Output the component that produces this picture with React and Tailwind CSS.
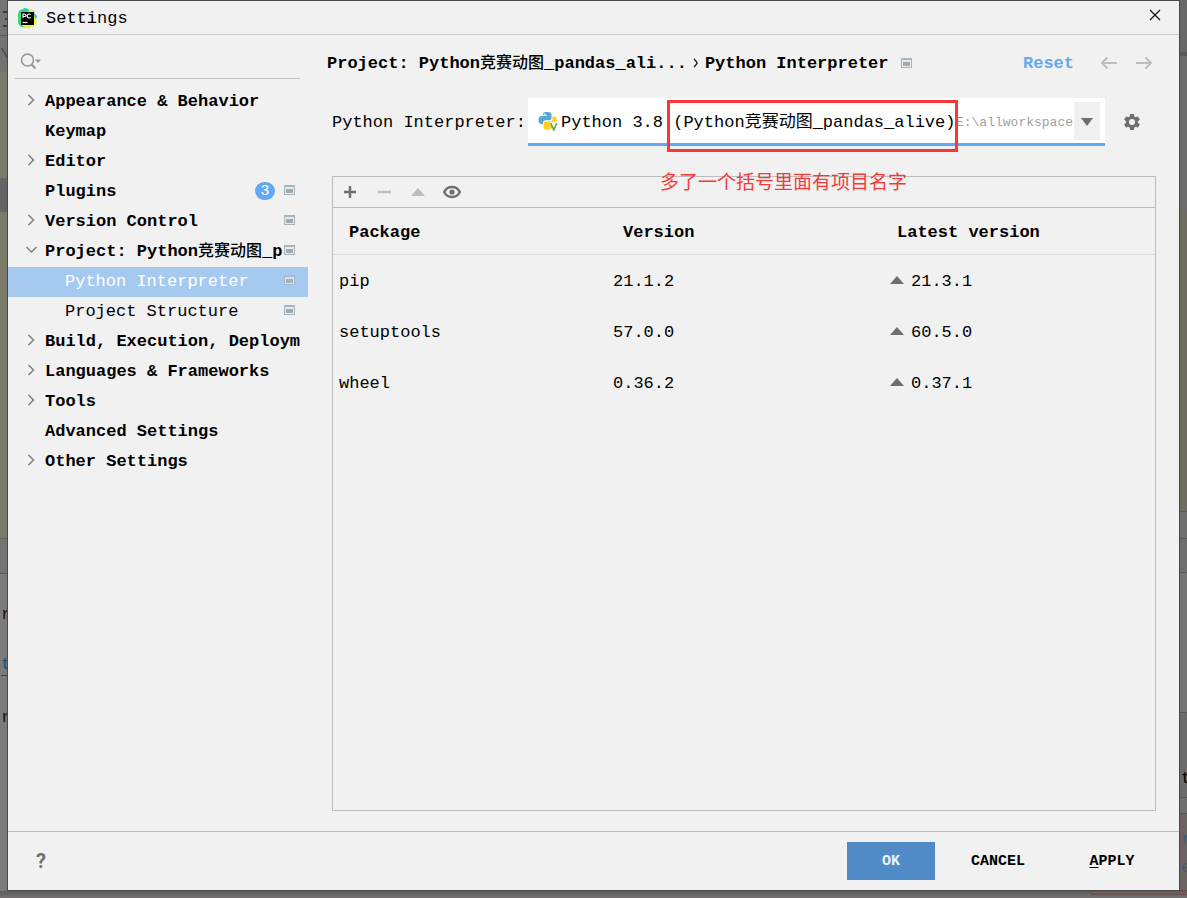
import React, { useState } from "react";

const MENU = [
  { name: "Appearance & Behavior", arrow: "right" },
  { name: "Keymap" },
  { name: "Editor", arrow: "right" },
  { name: "Plugins", count: 3, project: true },
  { name: "Version Control", arrow: "right", project: true },
  { name: "Project: Python", cjk: "竞赛动图", rest: "_p", arrow: "down", project: true },
  { name: "Python Interpreter", child: true, project: true },
  { name: "Project Structure", child: true, project: true },
  { name: "Build, Execution, Deploym", arrow: "right" },
  { name: "Languages & Frameworks", arrow: "right" },
  { name: "Tools", arrow: "right" },
  { name: "Advanced Settings" },
  { name: "Other Settings", arrow: "right" },
];

const PACKAGES = [
  { name: "pip", version: "21.1.2", latest: "21.3.1" },
  { name: "setuptools", version: "57.0.0", latest: "60.5.0" },
  { name: "wheel", version: "0.36.2", latest: "0.37.1" },
];

const Logo = () => (
  <svg width="20" height="20" viewBox="0 0 20 20" aria-hidden="true">
    <path d="M2 3 8 0l5 2 4 1 1 7-1 8-6 2-7-1-3-4z" fill="#21d789" />
    <path d="M13 3 16 4 20 8 18 13 15 9z" fill="#07c3f2" />
    <path d="M1 5 4 3v14l-3-3z" fill="#3ddc6d" />
    <path d="M10 2 15 1l2 5 1 4 2 4-4 5-7 1-5-3z" fill="#e6f23c" />
    <path d="M2 3 8 0l4 2-2 4H3z" fill="#21d7a0" />
    <rect x="4" y="4" width="13" height="13" fill="#000" />
    <path
      d="M6 10V6h1.600a1.200 1.200 0 0 1 0 2.500H6M13.600 6.600a2 2 0 1 0 0 2.800"
      fill="none"
      stroke="#fff"
      strokeWidth="1.200"
    />
    <path d="M5.500 14.500h5" stroke="#fff" strokeWidth="1.200" />
  </svg>
);

const ProjectIcon = ({ className }) => (
  <svg
    width="11"
    height="10"
    viewBox="0 0 11 10"
    className={`shrink-0 ${className || ""}`}
    aria-hidden="true"
  >
    <path d="M0 0h11v10H0z" fill="#aab4ba" />
    <path d="M1 2h9v7H1z" fill="#e6eaec" />
    <path d="M2 4h7v4H2z" fill="#a0abb1" />
  </svg>
);

const Chevron = ({ dir }) => (
  <svg
    width="14"
    height="14"
    viewBox="0 0 14 14"
    fill="none"
    stroke="#7f7f7f"
    strokeWidth="1.500"
    className="mb-1"
    aria-hidden="true"
  >
    <path d={dir === "down" ? "M2.500 4l5 5 5-5" : "M4.500 2l5 5-5 5"} />
  </svg>
);

const Triangle = ({ color, down, width = 14, className }) => (
  <svg
    width={width}
    height="8"
    viewBox="0 0 14 8"
    preserveAspectRatio="none"
    className={className}
    aria-hidden="true"
  >
    <path d={down ? "M0 0h14L7 8z" : "M0 8h14L7 0z"} fill={color} />
  </svg>
);

const Arrow = ({ back }) => (
  <svg
    width="18"
    height="14"
    viewBox="0 0 18 14"
    fill="none"
    stroke="#bdbdbd"
    strokeWidth="2"
    aria-hidden="true"
  >
    <path d={back ? "M17 7H2M7.500 1.500 2 7l5.500 5.500" : "M1 7h15M10.500 1.500 16 7l-5.500 5.500"} />
  </svg>
);

const PythonIcon = () => (
  <svg width="20" height="20" viewBox="0 0 20 20" className="shrink-0" aria-hidden="true">
    <path
      d="M5 5V3.500C5 1.500 6.500 1 9 1s4.500.5 4.500 2.500V7c0 1.500-1 2.300-2.300 2.300H7.500C6 9.300 5 10.300 5 11.700V13H3.500C1.500 13 .5 11.500.5 9s1-4 3-4H9v-.8H5z"
      fill="#56a8d6"
    />
    <path
      d="M14.500 5.500H16c2 0 2.800 1.500 2.800 4v2h-3L14 17c-1 1.300-2.800 1.700-4.500 1.700-2.500 0-4-.6-4-2.400V13c0-1.500 1-2.500 2.500-2.500h3.800c1.600 0 2.700-1 2.700-2.500z"
      fill="#ffd21f"
    />
    <circle cx="7" cy="3.200" r=".8" fill="#fff" />
    <path d="M12 11l3.500 9L19.500 11z" fill="#fff" />
    <path d="M12.800 12l3 7 3-7" fill="none" stroke="#5fad4e" strokeWidth="1.700" />
  </svg>
);

const GearIcon = () => (
  <svg width="20" height="20" viewBox="0 0 24 24" fill="#6e6e6e" aria-hidden="true">
    <path d="M19.140 12.940c.04-.3.06-.61.06-.94s-.02-.64-.07-.94l2.030-1.580c.18-.14.23-.41.12-.61l-1.920-3.320c-.12-.22-.37-.29-.59-.22l-2.390.96c-.5-.38-1.030-.7-1.620-.94L14.400 2.810c-.04-.24-.24-.41-.48-.41h-3.840c-.24 0-.43.17-.47.41L9.250 5.350c-.59.24-1.130.57-1.620.94L5.240 5.330c-.22-.08-.47 0-.59.22L2.740 8.870c-.12.21-.08.47.12.61l2.030 1.580c-.05.3-.09.63-.09.94s.02.64.07.94l-2.030 1.580c-.18.14-.23.41-.12.61l1.920 3.320c.12.22.37.29.59.22l2.390-.96c.5.38 1.030.7 1.620.94l.36 2.540c.05.24.24.41.48.41h3.840c.24 0 .44-.17.47-.41l.36-2.540c.59-.24 1.130-.56 1.620-.94l2.390.96c.22.08.47 0 .59-.22l1.920-3.320c.12-.22.07-.47-.12-.61zM12 15.600a3.600 3.600 0 1 1 0-7.200 3.600 3.600 0 0 1 0 7.200z" />
  </svg>
);

const SidebarItem = ({ item, active, onSelect }) => (
  <li>
    <button
      type="button"
      onClick={onSelect}
      className={`flex h-[30px] w-full items-center whitespace-pre pr-[13px] text-left ${
        active ? "bg-[#a6c9f0] text-white" : "text-black"
      } ${item.child ? "pl-[57px]" : "pl-4 font-bold"}`}
    >
      {!item.child && (
        <span className="w-[21px] shrink-0">
          {item.arrow && <Chevron dir={item.arrow} />}
        </span>
      )}
      <span className="min-w-0 flex-1">
        {item.name}
        {item.cjk && <span className="text-base font-medium">{item.cjk}</span>}
        {item.rest}
      </span>
      {item.count && (
        <span className="mb-0.5 mr-[9px] flex h-[18px] w-5 items-center justify-center rounded-full bg-[#62a8f2] pt-0.5 text-[15px] font-normal text-white">
          {item.count}
        </span>
      )}
      {item.project && <ProjectIcon className={active ? "mb-1 opacity-70" : "mb-1"} />}
    </button>
  </li>
);

const Sidebar = () => {
  const [selected, setSelected] = useState("Python Interpreter");

  return (
    <aside className="w-[300px] shrink-0">
      <label className="ml-[7px] mr-2 flex h-11 items-center border-b border-[#c0c0c0] pl-[5px] pt-2">
        <svg
          width="22"
          height="18"
          viewBox="0 0 22 18"
          fill="none"
          stroke="#8b969e"
          strokeWidth="1.500"
          aria-hidden="true"
        >
          <circle cx="7.500" cy="8" r="6" />
          <path d="M11.500 12.500l4 4" strokeWidth="2" />
          <path d="M15 7.500h6l-3 3.500z" fill="#8b969e" stroke="none" />
        </svg>
        <input
          type="search"
          aria-label="Search settings"
          className="min-w-0 flex-1 bg-transparent outline-none"
        />
      </label>
      <ul className="mt-2">
        {MENU.map((item) => (
          <SidebarItem
            key={item.name}
            item={item}
            active={selected === item.name}
            onSelect={() => setSelected(item.name)}
          />
        ))}
      </ul>
    </aside>
  );
};

const PackageTable = () => (
  <section className="relative mt-[30px] flex-1 border border-[#bdbdbd]">
    <div className="flex h-[31px] items-center gap-4 border-b border-[#bdbdbd] pl-2">
      <button type="button" aria-label="Install" className="flex w-[18px] justify-center">
        <svg width="14" height="14" viewBox="0 0 14 14" stroke="#6e6e6e" strokeWidth="2.400">
          <path d="M7 1v12M1 7h12" />
        </svg>
      </button>
      <button type="button" aria-label="Uninstall" className="flex w-[18px] justify-center">
        <svg width="14" height="14" viewBox="0 0 14 14" stroke="#bdbdbd" strokeWidth="2.400">
          <path d="M1 7h13" />
        </svg>
      </button>
      <button type="button" aria-label="Upgrade" className="flex w-[18px] justify-center">
        <Triangle color="#bdbdbd" />
      </button>
      <button type="button" aria-label="Show early releases" className="flex w-[18px] justify-center">
        <svg width="18" height="14" viewBox="0 0 18 14" fill="none" className="shrink-0">
          <path
            d="M1.200 7C3 3.200 6 2 9 2S15 3.200 16.800 7C15 10.800 12 12 9 12S3 10.800 1.200 7z"
            stroke="#6e6e6e"
            strokeWidth="2.400"
          />
          <circle cx="9" cy="7" r="2.600" fill="#6e6e6e" />
        </svg>
      </button>
    </div>
    <table className="w-full table-fixed text-left">
      <thead>
        <tr className="h-[46px] border-b border-[#dcdcdc]">
          <th className="pl-4 pt-1">Package</th>
          <th className="pl-4 pt-1">Version</th>
          <th className="pl-4 pt-1">Latest version</th>
        </tr>
      </thead>
      <tbody>
        {PACKAGES.map((pkg) => (
          <tr key={pkg.name} className="h-[51px]">
            <td className="pl-1.5 pt-1">{pkg.name}</td>
            <td className="pl-1.5 pt-1">{pkg.version}</td>
            <td className="pl-[9px] pt-1">
              <span className="flex items-center gap-[7px]">
                <Triangle color="#6e6e6e" className="mb-1" />
                {pkg.latest}
              </span>
            </td>
          </tr>
        ))}
      </tbody>
    </table>
    <p className="absolute -top-2.5 left-[327px] h-7 whitespace-nowrap font-['Noto_Sans_CJK_SC',sans-serif] text-[19px] leading-7 text-[#fb3838]">
      多了一个括号里面有项目名字
    </p>
  </section>
);

const InterpreterPanel = () => (
  <main className="flex min-w-0 flex-1 flex-col pb-5 pl-6 pr-[23px]">
    <div className="-ml-[5px] flex h-14 items-center whitespace-pre font-bold">
      <span className="pt-0.5">
        Project: Python<span className="text-base font-medium">竞赛动图</span>_pandas_ali...
      </span>
      <svg
        width="6"
        height="10"
        viewBox="0 0 6 10"
        fill="none"
        stroke="#222"
        strokeWidth="1.500"
        className="mx-1.5"
        aria-hidden="true"
      >
        <path d="M1 1c1.500 1.500 3 3 3 4S2.500 7.500 1 9" />
      </svg>
      <h1 className="pt-0.5">Python Interpreter</h1>
      <ProjectIcon className="ml-3" />
      <button type="button" className="ml-auto pt-0.5 text-[#62a8f2]">
        Reset
      </button>
      <button type="button" aria-label="Back" className="ml-[26px]">
        <Arrow back />
      </button>
      <button type="button" aria-label="Forward" className="ml-[17px] mr-[3px]">
        <Arrow />
      </button>
    </div>

    <div className="mt-[7px] flex items-center">
      <label htmlFor="interpreter" className="w-[196px] shrink-0 whitespace-nowrap pt-0.5">
        Python Interpreter:
      </label>
      <div className="relative flex h-12 min-w-0 flex-1 items-center border-b-[3px] border-[#62a8f2] bg-white pl-[10px] pr-[5px]">
        <PythonIcon />
        <select
          id="interpreter"
          className="ml-[3px] min-w-0 flex-1 appearance-none bg-transparent pt-1 outline-none"
        >
          <option>Python 3.8 (Python竞赛动图_pandas_alive)</option>
        </select>
        <span className="shrink-0 pt-1 text-[13px] text-[#9f9f9f]">E:\allworkspace</span>
        <span className="ml-px flex h-[38px] w-[26px] shrink-0 items-center justify-center bg-[#f0f0f0] pt-0.5">
          <Triangle color="#6e6e6e" down width={12} />
        </span>
        <div className="pointer-events-none absolute left-[139px] top-0.5 h-[52px] w-[291px] border-[3px] border-[#fb3838]" />
      </div>
      <button type="button" aria-label="Interpreter options" className="ml-[17px] mr-[14px]">
        <GearIcon />
      </button>
    </div>

    <PackageTable />
  </main>
);

// slices of the dimmed editor window on both sides of the dialog
const EditorLeft = () => (
  <div className="flex w-[7px] shrink-0 flex-col overflow-hidden bg-[#7b7b7b]">
    <div className="flex h-9 flex-col justify-end gap-[5px] border-b border-[#555] bg-[#747474] pb-2">
      <i className="ml-[3px] h-0.5 bg-[#3c3c3c]" />
      <i className="ml-[5px] h-0.5 bg-[#3c3c3c]" />
      <i className="ml-[3px] h-0.5 bg-[#3c3c3c]" />
    </div>
    <div className="flex h-9 items-center bg-[#737373] pt-1 text-[#3b4750]">\</div>
    <div className="h-[106px] bg-[#7a7a69]" />
    <div className="h-[34px] bg-[#656565]" />
    <div className="h-[327px] border-b border-[#626262] bg-[#7a7a69]" />
    <div className="h-[35px] border-b border-[#5c5c5c] bg-[#747474]" />
    <div className="flex h-[102px] flex-col justify-between pl-px pt-[31px] text-[#2a0f0f]">
      <span>r</span>
      <span className="border-b border-[#174e75] text-[#174e75]">t</span>
    </div>
    <div className="pl-px pt-8 text-[#2a0f0f]">r</div>
  </div>
);

const EditorRight = () => (
  <div className="flex w-[7px] shrink-0 flex-col overflow-hidden bg-[#6f6f6f]">
    <div className="h-14 border-b-4 border-[#595959] bg-[#686868]" />
    <div className="h-[155px] bg-[#6d6d6d]" />
    <div className="h-[300px] bg-[#6d6d64]" />
    <div className="h-7 border-y border-[#5a5a5a]" />
    <div className="h-[34px] border-b border-[#5a5a5a]" />
    <div className="h-[140px] border-b border-[#585858] bg-[#757575]" />
    <div className="flex h-[85px] items-end border-b border-[#585858] bg-[#6b6b6b] pb-2 pl-px">
      t
    </div>
    <div className="mt-[15px] flex flex-1 flex-col border-y border-[#6b4a4a] bg-[#6b6262] pl-px pt-4 text-[#3c5b80]">
      <span className="h-7">r</span>
      <span className="h-7">e</span>
    </div>
  </div>
);

const App = () => (
  <div className="flex min-h-screen flex-col bg-[#6c6a6a] font-['Liberation_Mono','Noto_Sans_CJK_SC',monospace] text-[17px] leading-5 text-black">
    <div className="flex flex-1">
      <EditorLeft />
      <div
        role="dialog"
        aria-label="Settings"
        className="flex min-w-0 flex-1 flex-col border border-[#484848] bg-[#f1f1f1]"
      >
        <header className="flex h-[34px] items-center border-b border-[#cbcbcb] pl-[9px] pr-[18px]">
          <Logo />
          <span className="ml-[9px] flex-1 pt-0.5">Settings</span>
          <button type="button" aria-label="Close" className="pb-1.5">
            <svg width="12" height="12" viewBox="0 0 12 12" stroke="#111" strokeWidth="1.200">
              <path d="M1 1l10 10M11 1 1 11" />
            </svg>
          </button>
        </header>

        <div className="flex flex-1">
          <Sidebar />
          <InterpreterPanel />
        </div>

        <footer className="flex h-[59px] items-center border-t border-[#bdbdbd] pl-7 pr-[23px] text-[15px] font-bold">
          <button
            type="button"
            aria-label="Help"
            className="mr-auto font-['Roboto',sans-serif] text-xl text-[#6e6e6e]"
          >
            ?
          </button>
          <button type="button" className="h-[38px] w-[88px] bg-[#508bc7] pt-0.5 text-[#eaf2fa]">
            OK
          </button>
          <button type="button" className="ml-[19px] h-[38px] w-[88px] pt-0.5">
            CANCEL
          </button>
          <button type="button" className="ml-[26px] h-[38px] w-[88px] pt-0.5">
            <u className="underline-offset-2">A</u>PPLY
          </button>
        </footer>
      </div>
      <EditorRight />
    </div>
    <div className="flex h-[7px] justify-end bg-linear-to-b from-[#5c5a5a] to-[#737171]">
      <div className="h-1 w-24 border-b border-l border-[#6b4a4a]" />
    </div>
  </div>
);

export default App;
